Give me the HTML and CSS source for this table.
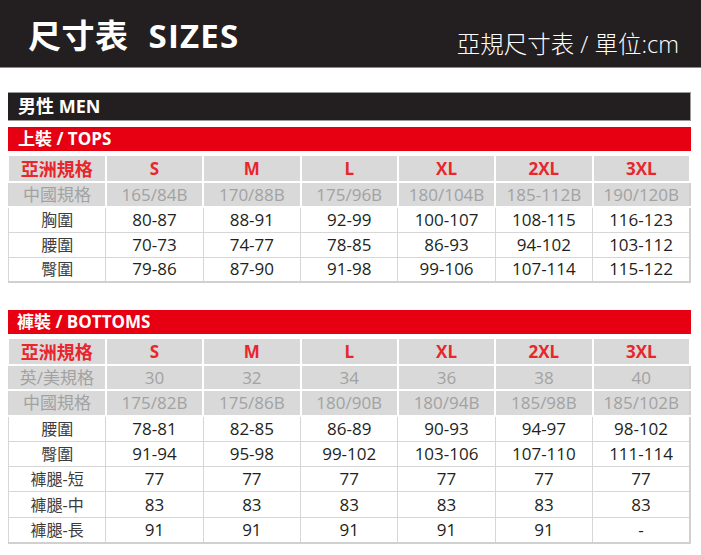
FILE: index.html
```html
<!DOCTYPE html>
<html lang="zh-Hant">
<head>
<meta charset="utf-8">
<title>尺寸表 SIZES</title>
<link rel="stylesheet" href="styles.css">
</head>
<body>
<header class="top">
  <h1 class="title">尺寸表<span class="en">SIZES</span></h1>
  <div class="unit">亞規尺寸表 / 單位:cm</div>
</header>

<main class="wrap">
  <div class="bar-men">男性 MEN</div>

  <div class="bar-red">上裝 / TOPS</div>
  <table class="size tops">
    <tr class="head"><th>亞洲規格</th><th>S</th><th>M</th><th>L</th><th>XL</th><th>2XL</th><th>3XL</th></tr>
    <tr class="grey"><td>中國規格</td><td>165/84B</td><td>170/88B</td><td>175/96B</td><td>180/104B</td><td>185-112B</td><td>190/120B</td></tr>
    <tr><td class="lbl">胸圍</td><td>80-87</td><td>88-91</td><td>92-99</td><td>100-107</td><td>108-115</td><td>116-123</td></tr>
    <tr><td class="lbl">腰圍</td><td>70-73</td><td>74-77</td><td>78-85</td><td>86-93</td><td>94-102</td><td>103-112</td></tr>
    <tr><td class="lbl">臀圍</td><td>79-86</td><td>87-90</td><td>91-98</td><td>99-106</td><td>107-114</td><td>115-122</td></tr>
  </table>

  <div class="bar-red second">褲裝 / BOTTOMS</div>
  <table class="size bottoms">
    <tr class="head"><th>亞洲規格</th><th>S</th><th>M</th><th>L</th><th>XL</th><th>2XL</th><th>3XL</th></tr>
    <tr class="grey"><td>英/美規格</td><td>30</td><td>32</td><td>34</td><td>36</td><td>38</td><td>40</td></tr>
    <tr class="grey"><td>中國規格</td><td>175/82B</td><td>175/86B</td><td>180/90B</td><td>180/94B</td><td>185/98B</td><td>185/102B</td></tr>
    <tr><td class="lbl">腰圍</td><td>78-81</td><td>82-85</td><td>86-89</td><td>90-93</td><td>94-97</td><td>98-102</td></tr>
    <tr><td class="lbl">臀圍</td><td>91-94</td><td>95-98</td><td>99-102</td><td>103-106</td><td>107-110</td><td>111-114</td></tr>
    <tr><td class="lbl">褲腿-短</td><td>77</td><td>77</td><td>77</td><td>77</td><td>77</td><td>77</td></tr>
    <tr><td class="lbl">褲腿-中</td><td>83</td><td>83</td><td>83</td><td>83</td><td>83</td><td>83</td></tr>
    <tr><td class="lbl">褲腿-長</td><td>91</td><td>91</td><td>91</td><td>91</td><td>91</td><td>-</td></tr>
  </table>
</main>
</body>
</html>
```

FILE: styles.css
```css
* { box-sizing: border-box; }

html, body {
  margin: 0;
  padding: 0;
  background: #ffffff;
}

body {
  font-family: "Open Sans", "Noto Sans CJK TC", sans-serif;
  color: #231f20;
}

.top {
  height: 68px;
  background: #231f20;
  display: flex;
  justify-content: space-between;
  align-items: flex-start;
  padding: 0 22px 0 28px;
  border-bottom: 1px solid #8a8a8a;
}

.title {
  margin: 16px 0 0;
  font-size: 33px;
  line-height: 40px;
  font-weight: 700;
  color: #ffffff;
  letter-spacing: 0.5px;
}

.title .en {
  margin-left: 20px;
  letter-spacing: 1.2px;
}

.unit {
  margin-top: 29px;
  font-size: 23.5px;
  line-height: 30px;
  font-weight: 300;
  color: #ffffff;
}

.wrap {
  padding: 24px 10px 0 8px;
}

.bar-men {
  height: 29px;
  background: #231f20;
  color: #ffffff;
  font-size: 18px;
  font-weight: 700;
  line-height: 29px;
  padding-left: 10px;
  border: 1px solid #9a9a9a;
  border-left: none;
  display: flex;
  align-items: center;
}

.bar-red {
  margin-top: 6px;
  height: 24px;
  background: #e60012;
  color: #ffffff;
  font-size: 17px;
  font-weight: 700;
  line-height: 24px;
  padding-left: 10px;
}

.bar-red.second {
  margin-top: 27px;
  padding-left: 9px;
}

.size {
  margin-top: 5px;
  width: 683px;
  table-layout: fixed;
  border-collapse: collapse;
  font-size: 17px;
  text-align: center;
}

.size td,
.size th {
  padding: 0;
  height: 25px;
  line-height: 22px;
  border: 1px solid #d6d6d6;
  white-space: nowrap;
}

.bottoms td {
  height: 25.4px;
}

.size .head th {
  height: 26px;
  background: #d9d9d9;
  color: #e8262c;
  font-weight: 700;
  font-size: 17px;
  border: 2px solid #ffffff;
  border-top: none;
}

.size .head th:first-child {
  font-size: 18px;
  border-left: none;
}

.size .grey td {
  background: #d9d9d9;
  color: #a2a2a2;
  border: 2px solid #ffffff;
}

.size .grey td:first-child {
  border-left: 1px solid #d6d6d6;
}

.size .lbl {
  color: #3c3c3c;
  font-size: 16px;
}

.size tr:last-child td {
  border-bottom: 2px solid #d0d0d0;
}

.size tr td:last-child {
  border-right: 2px solid #d0d0d0;
}
```
